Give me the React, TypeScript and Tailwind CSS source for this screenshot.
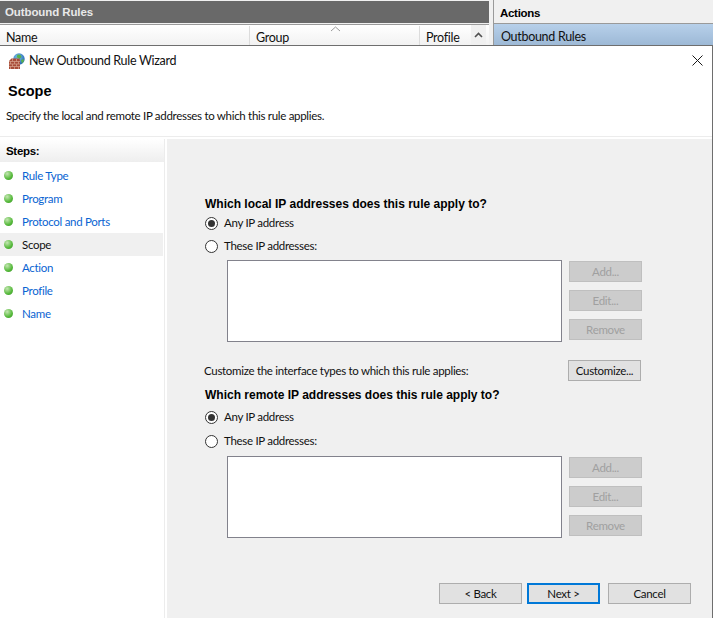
const steps = ['Rule Type', 'Program', 'Protocol and Ports', 'Scope', 'Action', 'Profile', 'Name'];

function WallIcon() {
  return (
    <svg width="16" height="16" viewBox="0 0 16 16" className="shrink-0">
      <defs>
        <radialGradient id="globe" cx="0.4" cy="0.35" r="0.7">
          <stop offset="0" stopColor="#7fc8ee" />
          <stop offset="1" stopColor="#1f5fb0" />
        </radialGradient>
      </defs>
      <circle cx="10" cy="6" r="5.7" fill="url(#globe)" />
      <path d="M8.500 1.500l3 .5 1 2-2 2-1-1-2-.5zM12 7l2.500-1 .5 2-2 2.500z" fill="#58b04a" />
      <path d="M0 8l2.500-2.500h8L11 8v8H0z" fill="#a84c38" />
      <path d="M0 8.500h11M0 11h11M0 13.500h11M3.500 6v2.500M7.500 6v2.500M1.500 8.500V11M5.500 8.500V11M9.500 8.500V11M3.500 11v2.500M7.500 11v2.500M1.500 13.500V16M5.500 13.500V16M9.500 13.500V16" stroke="#d9a690" strokeWidth="0.7" fill="none" />
    </svg>
  );
}

function StepDot() {
  return (
    <span className="block h-[9px] w-[9px] shrink-0 rounded-full bg-[radial-gradient(circle_at_35%_30%,#c4e6b2,#55b93a_60%,#3a8f2a)]" />
  );
}

function Radio({ checked, label }: { checked?: boolean; label: string }) {
  return (
    <div className="flex h-[14px] items-center gap-[6px]">
      <span className="flex h-[13px] w-[13px] shrink-0 items-center justify-center rounded-full border border-[#333333] bg-white">
        {checked && <span className="block h-[7px] w-[7px] rounded-full bg-[#333333]" />}
      </span>
      <span>{label}</span>
    </div>
  );
}

function SmallButton({ label }: { label: string }) {
  return (
    <div className="flex h-[21px] w-[73px] items-center justify-center border border-[#bfbfbf] bg-[#cccccc] text-[#a0a0a0]">
      {label}
    </div>
  );
}

function ListRow() {
  return (
    <div className="flex gap-[7px] pl-[22px]">
      <div className="h-[82px] w-[335px] border border-[#82828c] bg-white" />
      <div className="flex flex-col gap-[8px] pt-px">
        <SmallButton label="Add..." />
        <SmallButton label="Edit..." />
        <SmallButton label="Remove" />
      </div>
    </div>
  );
}

export default function App() {
  return (
    <div className="flex h-[618px] w-[713px] flex-col overflow-hidden bg-[#a0a0a0] font-['Lato','Roboto',sans-serif] text-[11.5px] tracking-[-0.3px] text-[#111111]">
      {/* MMC behind the wizard */}
      <div className="flex h-[45px] shrink-0 gap-[4px] bg-[#f0f0f0]">
        <div className="flex w-[489px] flex-col">
          <div className="mt-px flex h-[22px] items-center bg-[#696969] pt-[2px] pl-[5px] font-['Liberation_Sans',sans-serif] text-[11.5px] font-bold tracking-[-0.1px] text-[#e8e8e8]">
            Outbound Rules
          </div>
          <div className="relative mt-px flex h-[21px] items-end border-t border-[#9a9a9a] bg-gradient-to-b from-white to-[#f2f2f2] text-[12.5px] leading-[16px]">
            <div className="h-[19px] w-[250px] border-r border-[#dcdcdc] pt-[4px] pl-[6px]">Name</div>
            <div className="h-[19px] w-[170px] border-r border-[#dcdcdc] pt-[4px] pl-[6px]">Group</div>
            <div className="h-[19px] w-[51px] pt-[4px] pl-[6px]">Profile</div>
            <div className="flex h-[20px] w-[15px] justify-center bg-[#f0f0f0]">
              <svg width="9" height="6" viewBox="0 0 9 6" className="mt-[7px]">
                <path d="M1 5l3.500-3.500L8 5" stroke="#505050" strokeWidth="1.600" fill="none" />
              </svg>
            </div>
            <svg width="11" height="6" viewBox="0 0 11 6" className="absolute top-[1px] left-[330px]">
              <path d="M1 5l4.500-4L10 5" stroke="#9a9a9a" fill="none" />
            </svg>
          </div>
        </div>
        <div className="flex flex-1 flex-col border-l border-[#9a9a9a]">
          <div className="mt-[3px] flex h-[20px] items-center bg-[#f0f0f0] pt-[2px] pl-[6px] font-['Liberation_Sans',sans-serif] text-[11.5px] font-bold text-black">
            Actions
          </div>
          <div className="flex flex-1 items-end border-t border-[#9a9a9a] bg-gradient-to-b from-[#b7d0ea] to-[#9db9d6] pl-[7px] text-[12.5px] leading-[16px]">
            Outbound Rules
          </div>
        </div>
      </div>

      {/* wizard dialog */}
      <div className="flex min-h-0 flex-1 flex-col border-t border-r border-[#6e6e6e] bg-white">
        <div className="flex h-[30px] shrink-0 items-center pr-[9px] pl-[9px]">
          <WallIcon />
          <span className="ml-[4px] flex-1 text-[12.5px]">New Outbound Rule Wizard</span>
          <svg width="11" height="11" viewBox="0 0 11 11" className="mb-[2px]">
            <path d="M.5.5l10 10M10.500.5l-10 10" stroke="#1a1a1a" fill="none" />
          </svg>
        </div>
        <div className="mt-[6px] pl-[8px] font-['Liberation_Sans',sans-serif] text-[14.500px] leading-[18px] font-bold tracking-normal text-black">Scope</div>
        <div className="mt-[8px] pl-[6px] leading-[16px]">Specify the local and remote IP addresses to which this rule applies.</div>
        <div className="mt-[12px] h-[3px] shrink-0 border-t border-[#ececec]" />

        <div className="flex min-h-0 flex-1">
          <div className="flex w-[165px] shrink-0 flex-col border-r border-[#ececec]">
            <div className="flex h-[23px] items-center bg-gradient-to-b from-white to-[#eeeeee] pt-[2px] pl-[6px] font-['Liberation_Sans',sans-serif] text-[11.5px] font-bold text-black">
              Steps:
            </div>
            <div className="mt-[2px] flex w-[163px] flex-col">
              {steps.map((step) => (
                <div
                  key={step}
                  className={`flex h-[23px] items-center gap-[9px] pl-[4px] ${step === 'Scope' ? 'bg-[#f0f0f0]' : 'text-[#0a64d2]'}`}
                >
                  <StepDot />
                  <span>{step}</span>
                </div>
              ))}
            </div>
          </div>

          <div className="ml-[2px] flex flex-1 flex-col bg-[#f0f0f0] pt-[57px] pl-[38px]">
            <div className="font-['Liberation_Sans',sans-serif] text-[12px] leading-[16px] font-bold tracking-normal text-black">Which local IP addresses does this rule apply to?</div>
            <div className="mt-[4px]"><Radio checked label="Any IP address" /></div>
            <div className="mt-[9px]"><Radio label="These IP addresses:" /></div>
            <div className="mt-[7px]"><ListRow /></div>
            <div className="mt-[18px] flex h-[21px] items-center">
              <span className="w-[363px] -translate-x-px">Customize the interface types to which this rule applies:</span>
              <div className="flex h-[21px] w-[73px] items-center justify-center border border-[#adadad] bg-[#e1e1e1]">Customize...</div>
            </div>
            <div className="mt-[6px] font-['Liberation_Sans',sans-serif] text-[12px] leading-[16px] font-bold tracking-normal text-black">Which remote IP addresses does this rule apply to?</div>
            <div className="mt-[7px]"><Radio checked label="Any IP address" /></div>
            <div className="mt-[10px]"><Radio label="These IP addresses:" /></div>
            <div className="mt-[8px]"><ListRow /></div>
            <div className="mt-[45px] flex">
              <div className="ml-[234px] flex h-[21px] w-[83px] items-center justify-center border border-[#adadad] bg-[#e1e1e1]">&lt; Back</div>
              <div className="ml-[5px] flex h-[21px] w-[73px] items-center justify-center border-2 border-[#0078d7] bg-[#e1e1e1]">Next &gt;</div>
              <div className="ml-[8px] flex h-[21px] w-[83px] items-center justify-center border border-[#adadad] bg-[#e1e1e1]">Cancel</div>
            </div>
          </div>
        </div>
      </div>
    </div>
  );
}
